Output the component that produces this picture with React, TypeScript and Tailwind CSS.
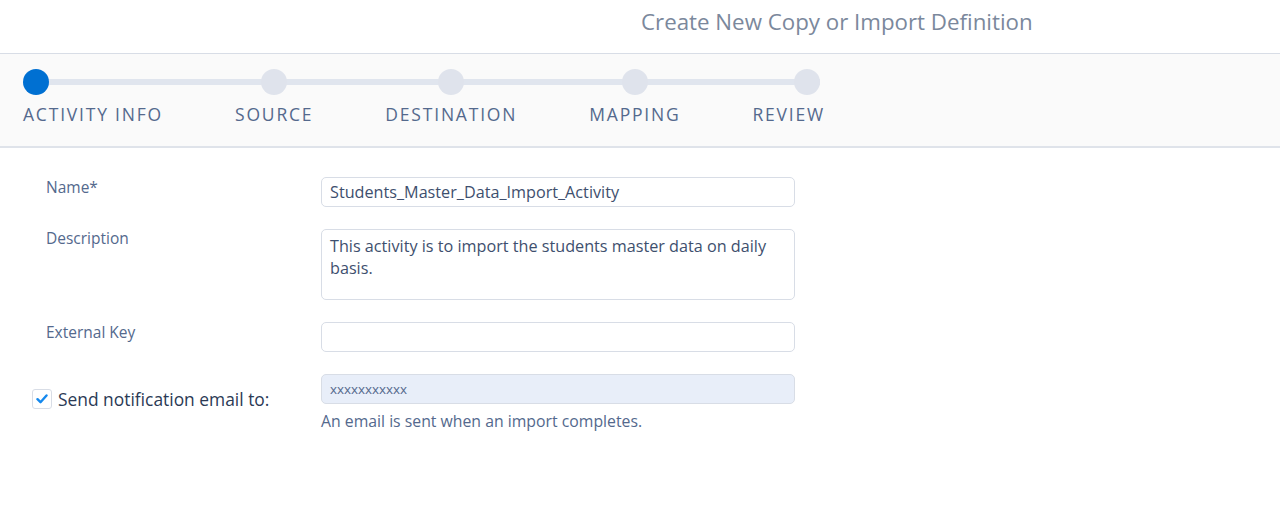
import React from "react";

const steps = ["ACTIVITY INFO", "SOURCE", "DESTINATION", "MAPPING", "REVIEW"];

export default function App() {
  return (
    <div className="w-[1280px] h-[530px] bg-white overflow-hidden" style={{ fontFamily: '"Open Sans", "Noto Sans", sans-serif' }}>
      <div className="h-[54px] border-b border-[#d8dde6] pl-[641px] pt-[7px]">
        <div className="text-[22.3px] leading-[30px] text-[#7b889c]">Create New Copy or Import Definition</div>
      </div>
      <div className="h-[94px] bg-[#fafafa] border-b-2 border-[#dfe3ea] pl-[23px] pt-[15px]">
        <div className="relative inline-flex gap-[72px]">
          <div className="absolute left-[13px] right-[5px] top-[10px] h-[6px] bg-[#e0e5ee]" />
          {steps.map((s, i) => (
            <div
              key={s}
              className={
                "relative flex flex-col " +
                (i === 0 ? "items-start" : i === steps.length - 1 ? "items-end" : "items-center")
              }
            >
              <div
                className={
                  "w-[26px] h-[26px] rounded-full " +
                  (i === 0 ? "bg-[#0070d2]" : "bg-[#dfe3ec]") +
                  (i === steps.length - 1 ? " mr-[5px]" : "")
                }
              />
              <div className="mt-[7px] text-[17.5px] leading-[24px] tracking-[1.8px] text-[#54698d]">{s}</div>
            </div>
          ))}
        </div>
      </div>
      <div className="pt-[29px]">
        <div className="flex">
          <div className="w-[321px] pl-[46px] text-[15.5px] leading-[20px] text-[#54698d]">Name*</div>
          <div className="w-[474px] h-[30px] border border-[#d8dde6] rounded-[5px] px-[8px] flex items-center text-[16.2px] text-[#3e4f6e]">
            Students_Master_Data_Import_Activity
          </div>
        </div>
        <div className="flex mt-[22px]">
          <div className="w-[321px] pl-[46px] -mt-[1px] text-[15.5px] leading-[20px] text-[#54698d]">Description</div>
          <div className="w-[474px] h-[71px] border border-[#d8dde6] rounded-[5px] pl-[8px] pr-[8px] pt-[5px] text-[16.2px] leading-[22px] text-[#3e4f6e]">
            This activity is to import the students master data on daily basis.
          </div>
        </div>
        <div className="flex mt-[22px]">
          <div className="w-[321px] pl-[46px] text-[15.5px] leading-[20px] text-[#54698d]">External Key</div>
          <div className="w-[474px] h-[30px] border border-[#d8dde6] rounded-[5px]" />
        </div>
        <div className="flex mt-[22px]">
          <div className="w-[321px] pl-[32px] pt-[15px] flex items-start">
            <div className="w-[20px] h-[20px] border border-[#d8dde6] rounded-[3px] bg-white flex items-center justify-center">
              <svg width="12" height="10" viewBox="0 0 12 10">
                <path d="M1.5 5.2 L4.5 8.2 L10.5 1.5" fill="none" stroke="#1589ee" strokeWidth="2.4" strokeLinecap="round" strokeLinejoin="round" />
              </svg>
            </div>
            <div className="ml-[6px] text-[17.4px] leading-[20px] text-[#2b3a55]">Send notification email to:</div>
          </div>
          <div className="flex flex-col">
            <div className="w-[474px] h-[30px] border border-[#d8dde6] rounded-[5px] bg-[#e8eef9] px-[8px] flex items-center text-[13.4px] text-[#54698d]">
              xxxxxxxxxxx
            </div>
            <div className="mt-[7px] text-[15.8px] leading-[20px] text-[#54698d]">An email is sent when an import completes.</div>
          </div>
        </div>
      </div>
    </div>
  );
}
